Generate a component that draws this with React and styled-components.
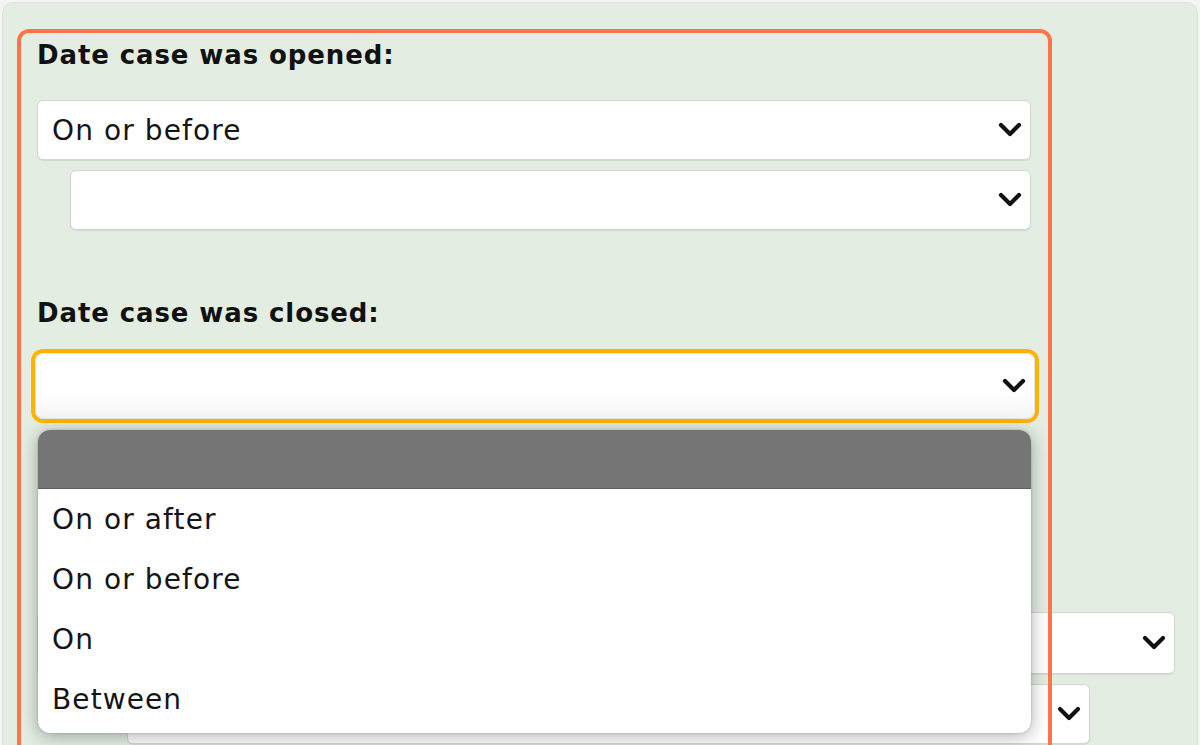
import React from 'react';
import styled, { createGlobalStyle } from 'styled-components';

const GlobalStyle = createGlobalStyle`
  html, body {
    margin: 0;
    padding: 0;
    background: #f3f4f3;
    overflow: hidden;
  }
  body {
    font-family: "DejaVu Sans", "Open Sans", sans-serif;
    color: #111;
  }
`;

const Panel = styled.div`
  position: relative;
  margin: 2px 2px 0 2px;
  height: 780px;
  background: #e3ede2;
  border: 1px solid #dce3db;
  border-bottom: none;
  border-radius: 12px 12px 0 0;
  padding: 36px 0 0 34px;
  box-sizing: border-box;
`;

const Highlight = styled.div`
  position: absolute;
  left: 14px;
  top: 26px;
  width: 1035px;
  height: 800px;
  border: 4px solid #ff7447;
  border-radius: 12px;
  box-sizing: border-box;
  pointer-events: none;
  z-index: 5;
`;

const Field = styled.div`
  display: flex;
  flex-direction: column;
  width: 994px;
  margin-bottom: ${p => p.$gap || 0}px;
`;

const Label = styled.div`
  font-size: 26px;
  line-height: 32px;
  font-weight: 700;
  letter-spacing: 0.9px;
  margin-bottom: ${p => p.$space || 29}px;
`;

const Spacer = styled.div`
  height: ${p => p.$h}px;
`;

const SelectWrap = styled.div`
  position: relative;
  margin-left: ${p => p.$indent || 0}px;
  margin-top: ${p => p.$top || 0}px;
  width: ${p => (p.$width ? `${p.$width}px` : 'auto')};
`;

const SelectBox = styled.div`
  display: flex;
  align-items: center;
  justify-content: space-between;
  height: ${p => p.$height || 60}px;
  padding: 0 8px 0 14px;
  box-sizing: border-box;
  background: ${p => (p.$focused ? 'linear-gradient(#fff 60%, #f4f4f4)' : '#fff')};
  border: 1px solid ${p => (p.$focused ? '#e6e6e6' : '#d4d4d4')};
  border-radius: ${p => (p.$focused ? 8 : 6)}px;
  box-shadow: ${p => (p.$focused ? '0 0 0 4px #ffb300' : '0 1px 1px rgba(0,0,0,0.08)')};
  font-size: 28px;
  letter-spacing: 1.1px;
  color: #151515;
`;

const Chevron = () => (
  <svg width="24" height="16" viewBox="0 0 24 16">
    <polyline points="3,3 12,12 21,3" fill="none" stroke="#111" strokeWidth="4.2" strokeLinecap="round" strokeLinejoin="round" />
  </svg>
);

const List = styled.div`
  position: absolute;
  left: 3px;
  right: 4px;
  top: calc(100% + 11px);
  background: #fff;
  border-radius: 12px;
  overflow: hidden;
  box-shadow: 0 3px 18px rgba(0, 0, 0, 0.32), 0 0 2px rgba(0, 0, 0, 0.25);
  padding-bottom: 4px;
  z-index: 3;
`;

const ListHeader = styled.div`
  height: 58px;
  background: #757575;
  border-bottom: 1px solid #5f5f5f;
`;

const Option = styled.div`
  height: 60px;
  display: flex;
  align-items: center;
  padding-left: 14px;
  font-size: 28px;
  letter-spacing: 1.1px;
  color: #151515;
`;

const Select = ({ value, focused, height, indent, top, width, children }) => (
  <SelectWrap $indent={indent} $top={top} $width={width}>
    <SelectBox $focused={focused} $height={height}>
      <span>{value}</span>
      <Chevron />
    </SelectBox>
    {children}
  </SelectWrap>
);

const options = ['On or after', 'On or before', 'On', 'Between'];

export default function App() {
  return (
    <>
      <GlobalStyle />
      <Panel>
        <Highlight />
        <Field $gap={67}>
          <Label>Date case was opened:</Label>
          <Select value="On or before" />
          <Select indent={33} top={10} />
        </Field>
        <Field $gap={126}>
          <Label $space={24}>Date case was closed:</Label>
          <Select focused height={66} indent={-2} width={1000}>
            <List>
              <ListHeader />
              {options.map(o => (
                <Option key={o}>{o}</Option>
              ))}
            </List>
          </Select>
        </Field>
        <Field>
          <Spacer $h={67} />
          <Select width={1138} height={62} />
          <Select indent={90} top={10} width={963} />
        </Field>
      </Panel>
    </>
  );
}
